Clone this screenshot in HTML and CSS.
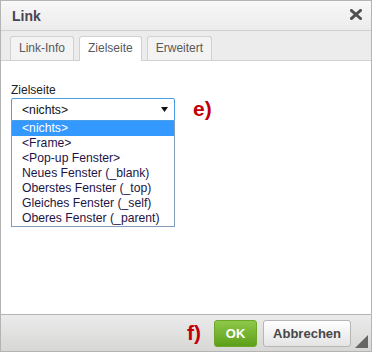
FILE: index.html
```html
<!DOCTYPE html>
<html lang="de">
<head>
    <meta charset="UTF-8">
    <title>Link</title>
    <link rel="stylesheet" href="styles.css">
</head>
<body>
    <div class="dialog">
        <div class="titlebar">
            <span class="title">Link</span>
            <svg class="close" width="12" height="11" viewBox="0 0 12 11">
                <path d="M1.5 1.5 L10.5 9.5 M10.5 1.5 L1.5 9.5" stroke="#505050" stroke-width="3" stroke-linecap="square"/>
            </svg>
        </div>
        <div class="tabs">
            <div class="tab">Link-Info</div>
            <div class="tab active">Zielseite</div>
            <div class="tab">Erweitert</div>
        </div>
        <div class="content">
            <label class="field-label">Zielseite</label>
            <div class="field-row">
                <div class="select-wrap">
                    <div class="select">
                        <span>&lt;nichts&gt;</span>
                        <svg width="7" height="5" viewBox="0 0 7 5"><path d="M0 0 H7 L3.5 5 Z" fill="#111"/></svg>
                    </div>
                    <ul class="options">
                        <li class="selected">&lt;nichts&gt;</li>
                        <li>&lt;Frame&gt;</li>
                        <li>&lt;Pop-up Fenster&gt;</li>
                        <li>Neues Fenster (_blank)</li>
                        <li>Oberstes Fenster (_top)</li>
                        <li>Gleiches Fenster (_self)</li>
                        <li>Oberes Fenster (_parent)</li>
                    </ul>
                </div>
                <span class="marker">e)</span>
            </div>
        </div>
        <div class="footer">
            <span class="marker">f)</span>
            <button class="btn ok">OK</button>
            <button class="btn">Abbrechen</button>
            <svg class="grip" width="13" height="13" viewBox="0 0 13 13"><path d="M13 0 V13 H0 Z" fill="#666"/></svg>
        </div>
    </div>
</body>
</html>
```

FILE: styles.css
```css
body {
    margin: 0;
    font-family: Arial, "Liberation Sans", sans-serif;
    background: #fff;
}
.dialog {
    position: relative;
    width: 372px;
    height: 352px;
    box-sizing: border-box;
    border: 1px solid #b4b4b4;
    display: flex;
    flex-direction: column;
    background: #fff;
}
.titlebar {
    height: 29px;
    flex: none;
    display: flex;
    align-items: center;
    justify-content: space-between;
    padding: 0 9px 0 11px;
    background: linear-gradient(#f8f8f8, #ebebeb);
    border-bottom: 1px solid #d0d0d0;
}
.title {
    font-size: 14px;
    font-weight: bold;
    color: #4a4450;
    margin-top: 1px;
}
.close {
    margin-top: -2px;
}
.tabs {
    height: 30px;
    flex: none;
    box-sizing: border-box;
    display: flex;
    align-items: flex-end;
    gap: 5px;
    padding: 0 0 0 9px;
    background: #ececec;
    border-bottom: 1px solid #d1d1d1;
}
.tab {
    height: 24px;
    box-sizing: border-box;
    padding: 0 8px;
    line-height: 23px;
    font-size: 12px;
    color: #595959;
    background: #f3f3f3;
    border: 1px solid #d1d1d1;
    border-bottom: none;
    border-radius: 3px 3px 0 0;
}
.tab.active {
    background: #fff;
    height: 25px;
    margin-bottom: -1px;
}
.content {
    flex: 1;
    padding: 22px 10px 0;
}
.field-label {
    display: block;
    font-size: 12px;
    line-height: 15px;
    color: #222;
}
.field-row {
    display: flex;
    align-items: flex-start;
    gap: 18px;
}
.select-wrap {
    width: 164px;
}
.select {
    height: 23px;
    box-sizing: border-box;
    display: flex;
    align-items: center;
    justify-content: space-between;
    padding: 0 6px 0 10px;
    border: 1px solid #4b9de6;
    border-radius: 2px 2px 0 0;
    font-size: 12.2px;
    color: #111;
}
.options {
    list-style: none;
    margin: 0;
    padding: 0;
    width: 164px;
    box-sizing: border-box;
    border: 1px solid #7f9db9;
    border-top: none;
}
.options li {
    height: 15px;
    line-height: 15px;
    padding-left: 10px;
    font-size: 12.2px;
    color: #1e1446;
}
.options li.selected {
    background: #3399ff;
    color: #fff;
}
.marker {
    color: #c2000a;
    font-weight: bold;
    font-size: 21px;
    line-height: 22px;
}
.footer {
    height: 37px;
    flex: none;
    display: flex;
    align-items: flex-start;
    justify-content: flex-end;
    gap: 6px;
    padding: 5px 20px 0 0;
    box-sizing: border-box;
    background: linear-gradient(#ebebeb, #d7d7d5);
    border-top: 1px solid #b5b5b5;
}
.footer .marker {
    margin: 0 7px 0 0;
    line-height: 26px;
}
.btn {
    height: 27px;
    padding: 0 9px;
    font-family: Arial, "Liberation Sans", sans-serif;
    font-size: 13px;
    font-weight: bold;
    color: #474747;
    background: linear-gradient(#fff, #e4e4e4);
    border: 1px solid #b6b6b6;
    border-radius: 3px;
}
.btn.ok {
    width: 43px;
    padding: 0;
    color: #fff;
    background: linear-gradient(#8fc84a, #5d9f19);
    border-color: #6aa825;
}
.grip {
    position: absolute;
    right: 3px;
    bottom: 3px;
}
```
